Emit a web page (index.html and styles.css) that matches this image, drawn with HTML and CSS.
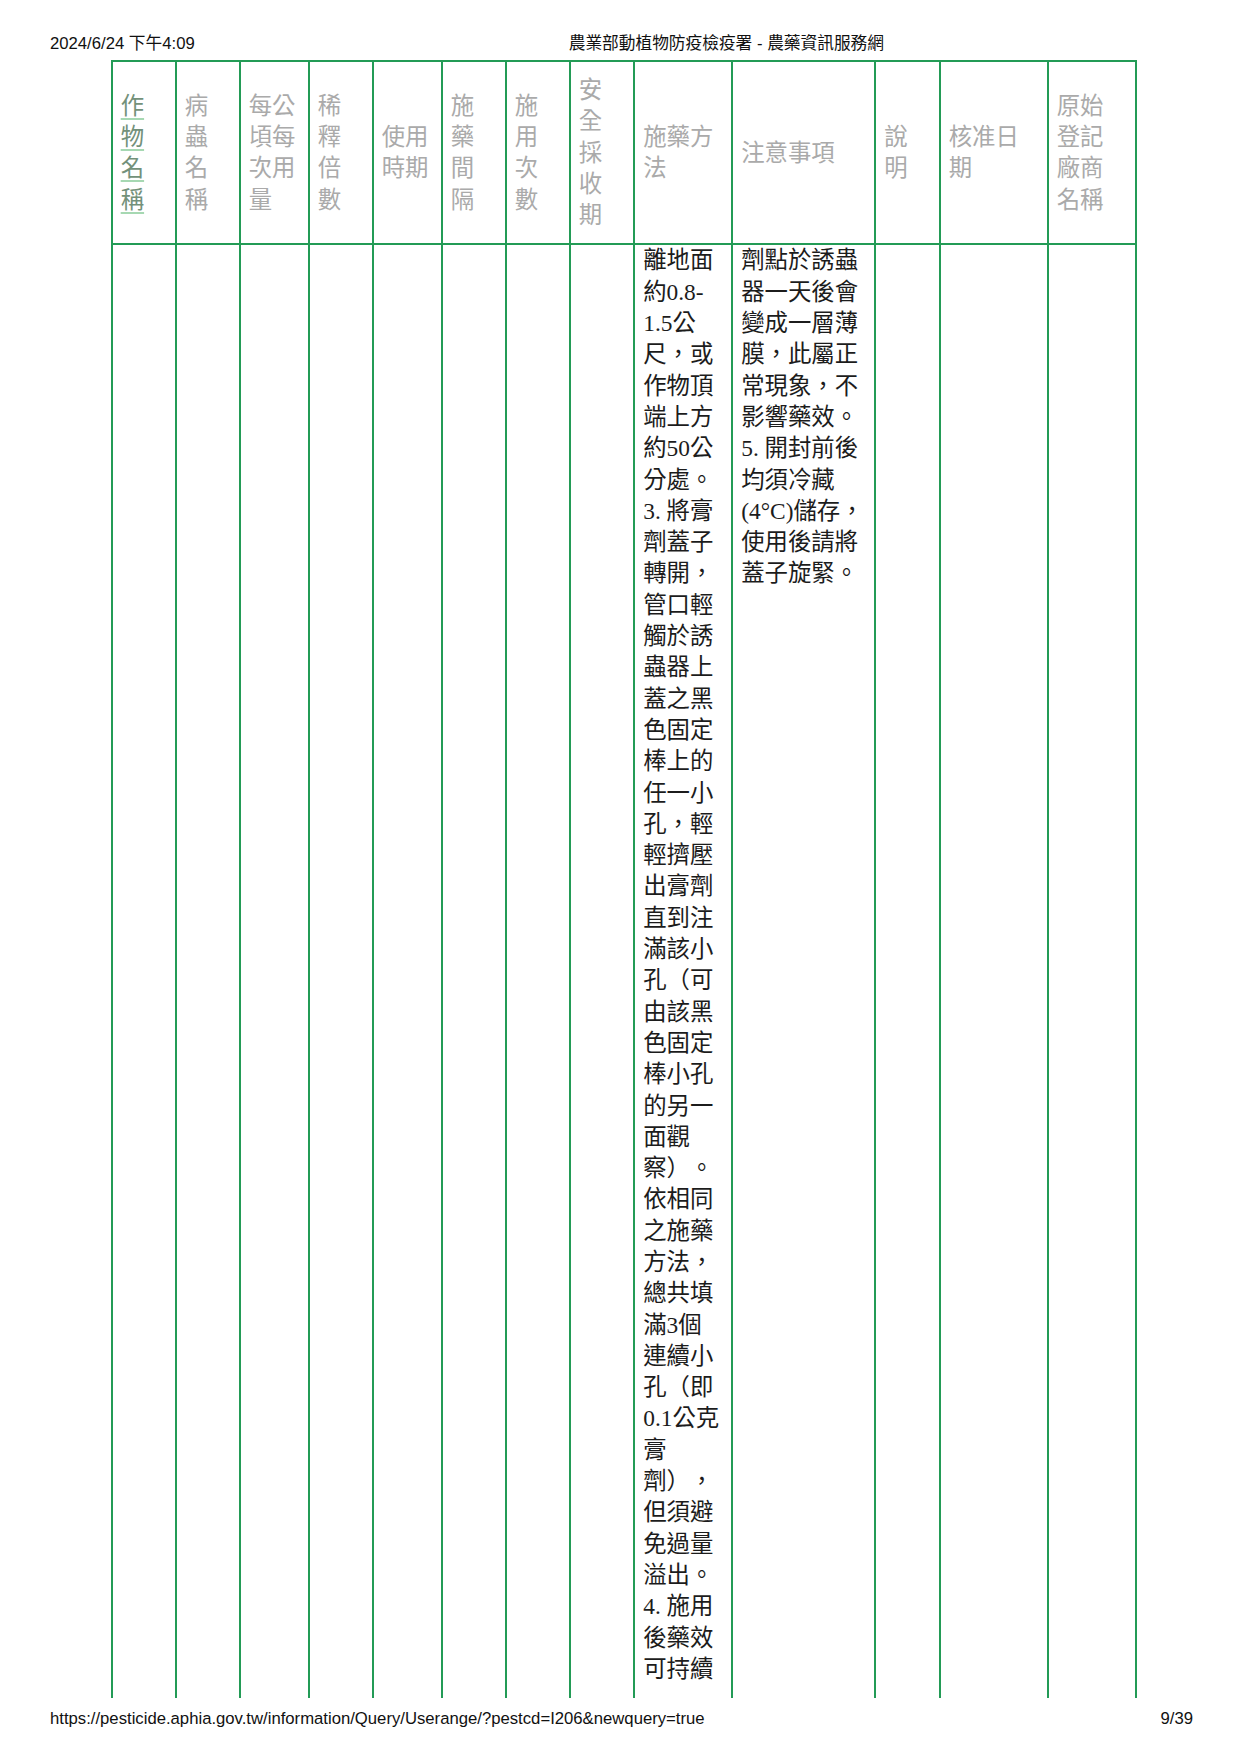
FILE: index.html
```html
<!DOCTYPE html>
<html lang="zh-TW">
<head>
<meta charset="utf-8">
<title>農業部動植物防疫檢疫署 - 農藥資訊服務網</title>
<link rel="stylesheet" href="styles.css">
</head>
<body>
<div class="page">
  <header class="print-head">
    <span class="print-date">2024/6/24 下午4:09</span>
    <span class="print-title">農業部動植物防疫檢疫署 - 農藥資訊服務網</span>
  </header>

  <table class="usage">
    <colgroup>
      <col class="w64"><col class="w64"><col class="w69"><col class="w64"><col class="w69"><col class="w64"><col class="w64"><col class="w64h">
      <col class="w98"><col class="w143"><col class="w64h"><col class="w108"><col class="w88">
    </colgroup>
    <thead>
      <tr>
        <th><a class="sort-link" href="#">作物名稱</a></th>
        <th>病蟲名稱</th>
        <th>每公頃每次用量</th>
        <th>稀釋倍數</th>
        <th>使用時期</th>
        <th>施藥間隔</th>
        <th>施用次數</th>
        <th>安全採收期</th>
        <th>施藥方法</th>
        <th>注意事項</th>
        <th>說明</th>
        <th>核准日期</th>
        <th>原始登記廠商名稱</th>
      </tr>
    </thead>
    <tbody>
      <tr>
        <td></td>
        <td></td>
        <td></td>
        <td></td>
        <td></td>
        <td></td>
        <td></td>
        <td></td>
        <td>離地面約0.8-1.5公尺，或作物頂端上方約50公分處。3. 將膏劑蓋子轉開，管口輕觸於誘蟲器上蓋之黑色固定棒上的任一小孔，輕輕擠壓出膏劑直到注滿該小孔（可由該黑色固定棒小孔的另一面觀察）。依相同之施藥方法，總共填滿3個連續小孔（即0.1公克膏劑），但須避免過量溢出。4. 施用後藥效可持續</td>
        <td>劑點於誘蟲器一天後會變成一層薄膜，此屬正常現象，不影響藥效。5. 開封前後均須冷藏(4°C)儲存，使用後請將蓋子旋緊。</td>
        <td></td>
        <td></td>
        <td></td>
      </tr>
    </tbody>
  </table>

  <footer class="print-foot">
    <span class="print-url">https://pesticide.aphia.gov.tw/information/Query/Userange/?pestcd=I206&amp;newquery=true</span>
    <span class="print-page">9/39</span>
  </footer>
</div>
</body>
</html>
```

FILE: styles.css
```css
html, body {
  margin: 0;
  padding: 0;
  background: #ffffff;
}

.page {
  width: 1241px;
  height: 1755px;
  padding-top: 34px;
  box-sizing: border-box;
  overflow: hidden;
  text-spacing-trim: space-all;
}

.print-head,
.print-foot {
  display: flex;
  align-items: baseline;
  height: 19px;
  line-height: 19px;
  padding: 0 48px 0 50px;
  font-family: "Liberation Sans", "Noto Sans CJK TC", sans-serif;
  font-size: 16.7px;
  color: #111111;
  white-space: nowrap;
}

.print-head {
  margin-bottom: 7px;
}

.print-title {
  margin-left: 374px;
  font-size: 16.7px;
}

.print-foot {
  justify-content: space-between;
  margin-top: 11px;
}

.usage {
  margin-left: 110.7px;
  width: 1024px;
  table-layout: fixed;
  border-collapse: collapse;
  font-family: "Liberation Serif", "Noto Sans CJK TC", serif;
  font-size: 23.4px;
  line-height: 31.3px;
  color: #1c1c1c;
  text-spacing-trim: space-all;
}

.w64 { width: 64px; }
.w64h { width: 64.5px; }
.w69 { width: 69px; }
.w98 { width: 98px; }
.w143 { width: 143px; }
.w108 { width: 108px; }
.w88 { width: 88px; }

.usage th,
.usage td {
  border-left: 2px solid #239b56;
  border-right: 2px solid #239b56;
  text-align: left;
  word-break: normal;
  overflow-wrap: break-word;
}

.usage th {
  border-top: 2px solid #239b56;
  border-bottom: 2px solid #239b56;
  padding: 13px 8px 12px;
  vertical-align: middle;
  font-weight: 400;
  color: #aaaaaa;
}

.usage td {
  padding: 0 8px 13px;
  vertical-align: top;
  border-bottom: none;
}

.sort-link {
  color: #73917a;
  text-decoration: underline;
  text-decoration-color: #a6d8b2;
  text-decoration-thickness: 2px;
  text-underline-offset: 4px;
}
```
